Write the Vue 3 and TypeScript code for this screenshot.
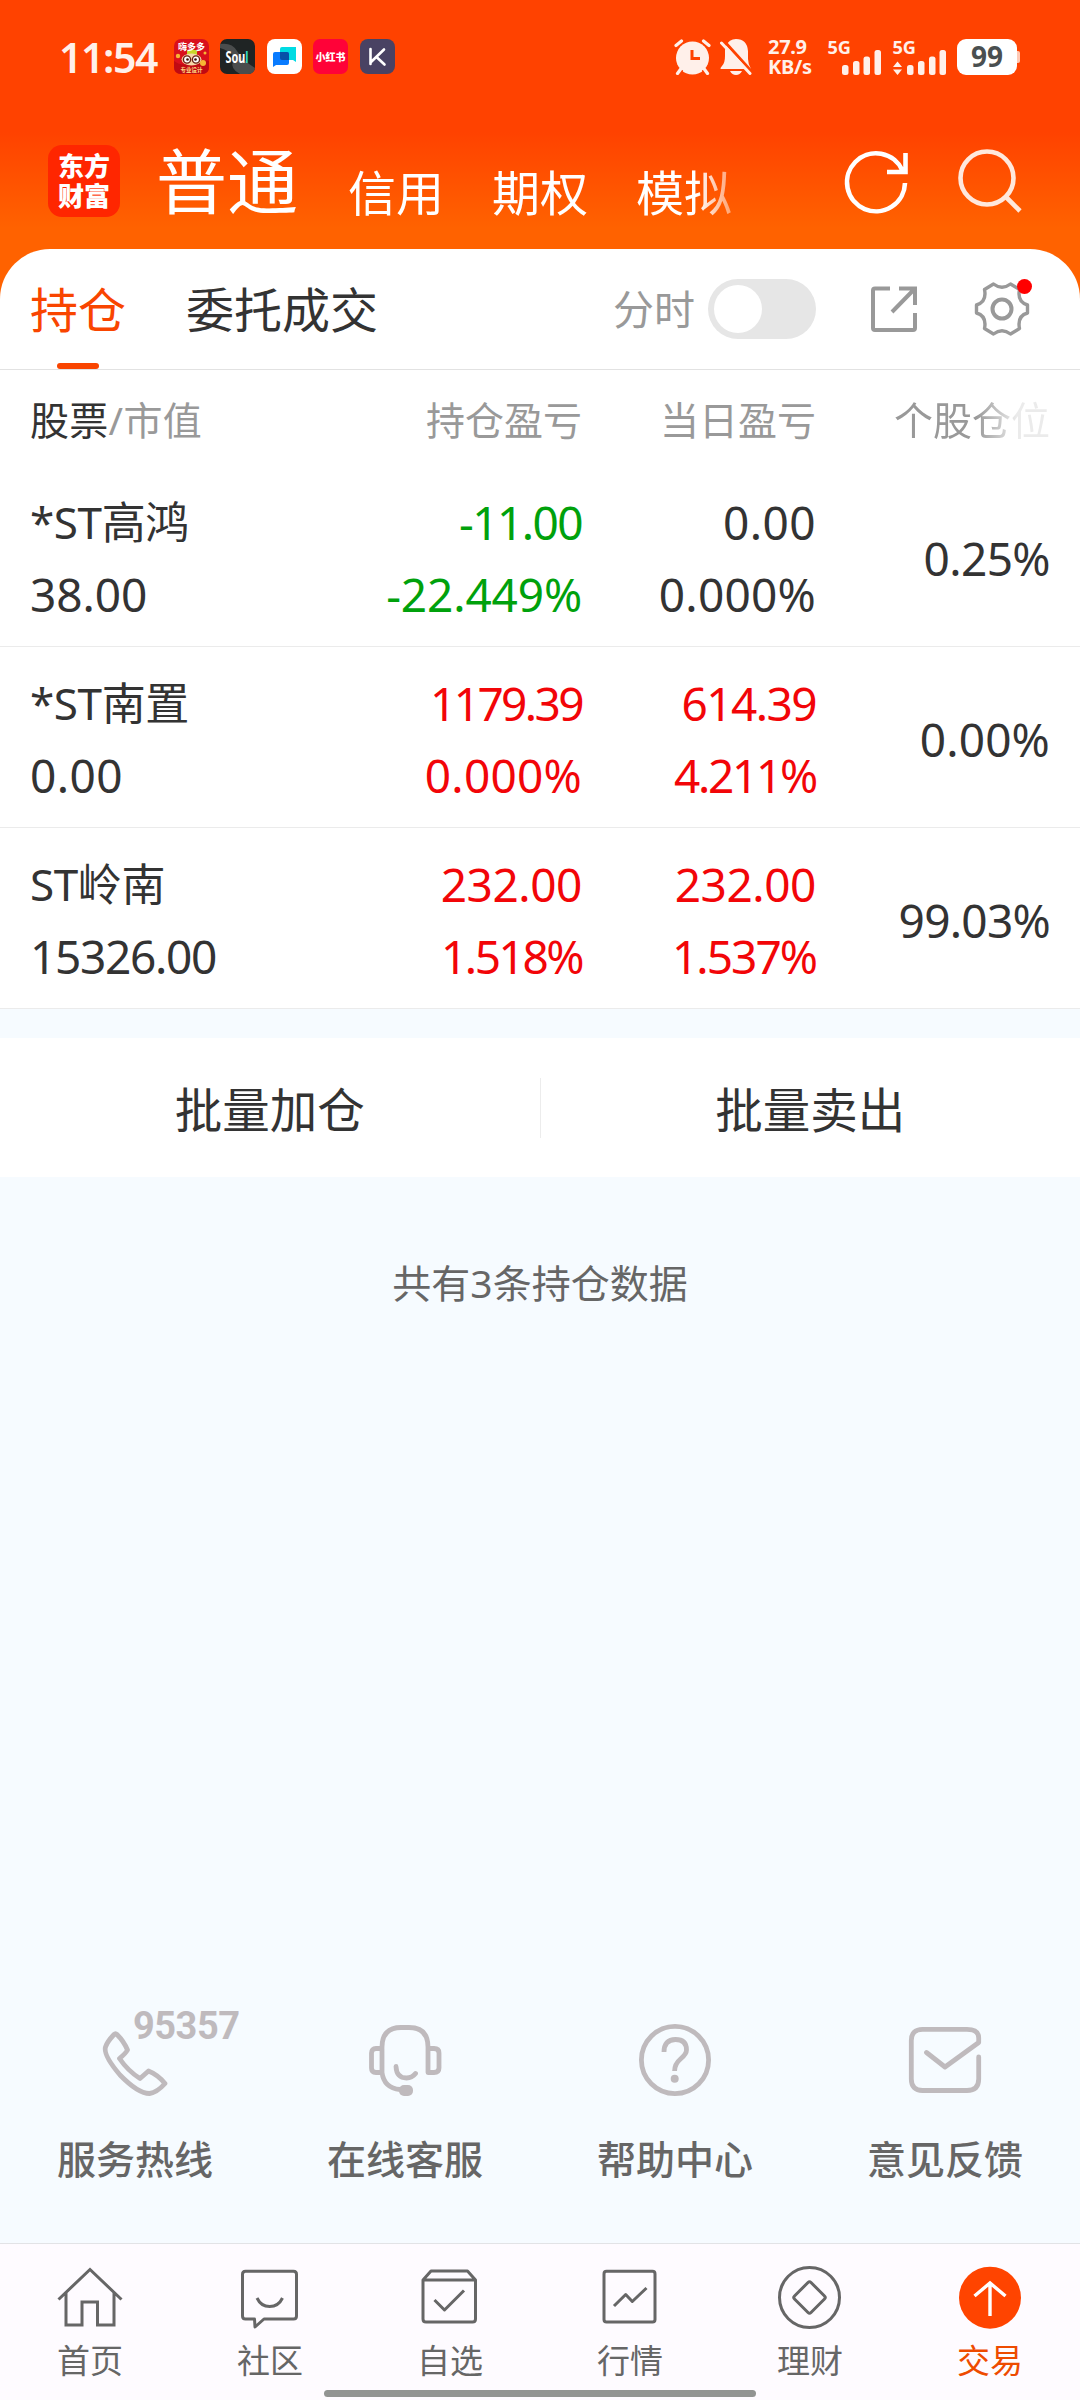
<script setup lang="ts">
interface Holding {
  name: string
  value: string
  profit: [string, string]
  today: [string, string]
  profitTone: string
  todayTone: string
  share: string
}

const accountTabs: string[] = ['信用', '期权', '模拟']

const holdings: Holding[] = [
  { name: '*ST高鸿', value: '38.00', profit: ['-11.00', '-22.449%'], today: ['0.00', '0.000%'], profitTone: 'down', todayTone: 'flat', share: '0.25%' },
  { name: '*ST南置', value: '0.00', profit: ['1179.39', '0.000%'], today: ['614.39', '4.211%'], profitTone: 'up', todayTone: 'up', share: '0.00%' },
  { name: 'ST岭南', value: '15326.00', profit: ['232.00', '1.518%'], today: ['232.00', '1.537%'], profitTone: 'up', todayTone: 'up', share: '99.03%' },
]

const services = [
  { id: 'phone', label: '服务热线' },
  { id: 'headset', label: '在线客服' },
  { id: 'help', label: '帮助中心' },
  { id: 'mail', label: '意见反馈' },
]

const navItems = [
  { id: 'home', label: '首页' },
  { id: 'community', label: '社区' },
  { id: 'watch', label: '自选' },
  { id: 'market', label: '行情' },
  { id: 'wealth', label: '理财' },
  { id: 'trade', label: '交易' },
]

const digitShift: Record<string, number> = {
  '0': 0.6, '1': -6.2, '2': -1.2, '3': -1.4, '4': 0.9, '5': -1.4, '6': -1.4, '7': -1.8, '9': -1.3, '-': 1.8, '%': -1,
}
function tracking(text: string): { letterSpacing: string } {
  const shift = [...text].reduce((sum, ch) => sum + (digitShift[ch] ?? 0), 0)
  return { letterSpacing: (shift / text.length).toFixed(2) + 'px' }
}
</script>

<template>
  <div class="screen">
    <header class="top">
      <div class="status">
        <span class="clock">11:54</span>
        <div class="apps">
          <svg width="35" height="35" viewBox="0 0 35 35">
            <rect width="35" height="35" rx="7" fill="#d9101c" />
            <path d="M0 22Q8 28 17 24T35 22V28Q35 35 28 35H7Q0 35 0 28Z" fill="#c00a12" />
            <rect x="13" y="11" width="10" height="5" rx="1" fill="#c8d72a" />
            <ellipse cx="17.500" cy="20.500" rx="10" ry="6" fill="#f6d7a8" />
            <circle cx="13" cy="20.500" r="3.600" fill="#fff" stroke="#6b2014" stroke-width="1.400" />
            <circle cx="22" cy="20.500" r="3.600" fill="#fff" stroke="#6b2014" stroke-width="1.400" />
            <circle cx="13.500" cy="20.500" r="1.300" fill="#401008" /><circle cx="21.500" cy="20.500" r="1.300" fill="#401008" />
            <circle cx="29" cy="24" r="3" fill="#f7b733" /><circle cx="4" cy="17" r="2.200" fill="#f7b733" /><circle cx="31" cy="14" r="1.500" fill="#f7b733" />
            <text x="17.500" y="11" font-size="9" font-weight="700" fill="#fff" text-anchor="middle">嗨多多</text>
            <text x="17.500" y="33" font-size="5.500" font-weight="700" fill="#ffd980" text-anchor="middle">专业设计</text>
          </svg>
          <svg width="35" height="35" viewBox="0 0 35 35">
            <rect width="35" height="35" rx="7" fill="#1f2424" />
            <path d="M0 5Q12 3 17 12T35 29Q34 35 28 35H20Q10 30 13 22T0 9Z" fill="#4a4d4d" />
            <text x="5.500" y="24" font-size="16.500" font-weight="700" fill="#fff" textLength="23" lengthAdjust="spacingAndGlyphs">Sou<tspan fill="#2fd9c4">l</tspan></text>
          </svg>
          <svg width="35" height="35" viewBox="0 0 35 35">
            <rect width="35" height="35" rx="8" fill="#fff" />
            <path d="M15 8H29V23L26 21H15Q13 21 13 19V10Q13 8 15 8Z" fill="#00dbe3" />
            <path d="M8 13H20Q22 13 22 15V24Q22 26 20 26H9L6 28V15Q6 13 8 13Z" fill="#087bff" />
            <path d="M13 13H20Q22 13 22 15V21H15Q13 21 13 19Z" fill="#0650a8" />
          </svg>
          <svg width="35" height="35" viewBox="0 0 35 35">
            <rect width="35" height="35" rx="7" fill="#ff0238" />
            <text x="17.500" y="21.500" font-size="10" font-weight="900" fill="#fff" text-anchor="middle">小红书</text>
          </svg>
          <svg width="35" height="35" viewBox="0 0 35 35">
            <rect width="35" height="35" rx="8" fill="#494263" />
            <path d="M10.500 10V25M24 10.500L10.500 23.500M16.500 18L24.500 25.500" fill="none" stroke="#fff" stroke-width="2.600" stroke-linecap="round" />
          </svg>
        </div>
        <div class="system">
          <svg class="alarm" width="37" height="36" viewBox="0 0 37 36">
            <circle cx="18.500" cy="19" r="16.500" fill="#fff0ea" />
            <path d="M1.500 6.500L7.500 1.500M35.500 6.500L29.500 1.500M7 30L3 35M30 30L34 35" stroke="#ff4200" stroke-width="6" />
            <circle cx="18.500" cy="19" r="15.500" fill="#fff0ea" />
            <path d="M2 6.500L7.500 2M35 6.500L29.500 2M7.500 29L3.500 34.500M29.500 29L33.500 34.500" stroke="#fff0ea" stroke-width="3.200" stroke-linecap="round" />
            <path d="M18 11V19.500H26" fill="none" stroke="#ff4200" stroke-width="3" />
          </svg>
          <svg class="bell" width="32" height="36" viewBox="0 0 32 36">
            <path d="M6 7Q9 0 16 0 27 0 28 12V20Q28 25 31 30H1Q-0.500 30 2 27 5 24 5 17V11Z" fill="#fff0ea" />
            <path d="M10 32H22Q20 36 16 36T10 32Z" fill="#fff0ea" />
            <path d="M4 2L33 34" stroke="#ff4200" stroke-width="3" />
            <path d="M1.500 4L30 34.500" stroke="#fff0ea" stroke-width="3" stroke-linecap="round" />
          </svg>
          <div class="speed"><span>27.9</span><span>KB/s</span></div>
          <svg class="signal" width="120" height="44" viewBox="0 -4 120 44">
            <g fill="#fff0ea">
              <text x="0.500" y="14.500" font-size="18.500" font-weight="700" textLength="23.500" lengthAdjust="spacingAndGlyphs">5G</text>
              <rect x="15" y="26" width="6.500" height="10" rx="2.500" /><rect x="26" y="22" width="6.500" height="14" rx="2.500" />
              <rect x="36.500" y="17.500" width="6.500" height="18.500" rx="2.500" /><rect x="47.500" y="11" width="6.500" height="25" rx="2.500" />
              <text x="65.500" y="14.500" font-size="18.500" font-weight="700" textLength="23.500" lengthAdjust="spacingAndGlyphs">5G</text>
              <path d="M66 28L70.500 22.500L75 28ZM66 30.500H75L70.500 36Z" />
              <rect x="80" y="26" width="6.500" height="10" rx="2.500" /><rect x="91" y="22" width="6.500" height="14" rx="2.500" />
              <rect x="102" y="17.500" width="6.500" height="18.500" rx="2.500" /><rect x="112.500" y="11" width="6.500" height="25" rx="2.500" />
            </g>
          </svg>
          <span class="battery">99</span><span class="nub"></span>
        </div>
      </div>
      <div class="account">
        <div class="logo"><span>东方</span><span>财富</span></div>
        <span class="current">普通</span>
        <div class="others"><span v-for="tab in accountTabs" :key="tab">{{ tab }}</span></div>
        <div class="actions">
          <svg width="72" height="72" viewBox="0 0 72 72" fill="none" stroke="#fff" stroke-width="4.600">
            <path d="M65 38A29 29 0 1 1 62.500 25.500M65.500 8V27H47" />
          </svg>
          <svg width="72" height="72" viewBox="0 0 72 72" fill="none" stroke="#ffe8dc" stroke-width="4.600">
            <circle cx="33" cy="33" r="26.500" /><path d="M51.500 51.500L66 66" />
          </svg>
        </div>
      </div>
    </header>

    <main class="card">
      <div class="tabs">
        <span class="tab active">持仓</span>
        <span class="tab">委托成交</span>
        <span class="minute">分时</span>
        <span class="switch"><i></i></span>
        <svg class="share" width="54" height="54" viewBox="0 0 54 54" fill="none" stroke="#999" stroke-width="4">
          <path d="M23 6.500H8Q6 6.500 6 8.500V46Q6 48 8 48H46Q48 48 48 46V31M32 6.500H48V23M47.500 7L25 30" />
        </svg>
        <div class="gear">
          <svg width="60" height="60" viewBox="0 0 60 60" fill="none" stroke="#999" stroke-width="3.400">
            <path d="M4.500 26Q15 23 12.500 10.500L21.500 5Q30 11.500 38.500 5L47.500 10.500Q45 23 55.500 26V34Q45 37 47.500 49.500L38.500 55Q30 48.500 21.500 55L12.500 49.500Q15 37 4.500 34Z" stroke-linejoin="round" />
            <circle cx="30" cy="30" r="9.500" stroke-width="4" />
          </svg>
          <i class="dot"></i>
        </div>
      </div>
      <div class="grid heading">
        <span class="first"><b>股票</b>/市值</span>
        <span>持仓盈亏</span>
        <span>当日盈亏</span>
        <span class="fading">个股仓位</span>
      </div>
      <div v-for="row in holdings" :key="row.name" class="grid row">
        <div class="cell first"><span class="name">{{ row.name }}</span><span :style="tracking(row.value)">{{ row.value }}</span></div>
        <div class="cell" :class="row.profitTone"><span v-for="n in row.profit" :key="n" :style="tracking(n)">{{ n }}</span></div>
        <div class="cell" :class="row.todayTone"><span v-for="n in row.today" :key="n" :style="tracking(n)">{{ n }}</span></div>
        <div class="cell portion"><span :style="tracking(row.share)">{{ row.share }}</span></div>
      </div>
    </main>

    <div class="batch"><span>批量加仓</span><i></i><span>批量卖出</span></div>
    <p class="count">共有3条持仓数据</p>

    <section class="services">
      <div v-for="s in services" :key="s.id" class="service">
        <svg width="80" height="80" viewBox="0 0 80 80" fill="none" stroke="#bfbabd" stroke-width="4.800" stroke-linecap="round" stroke-linejoin="round">
          <path v-if="s.id === 'phone'" d="M22 14.500Q29 21.500 32.500 30Q31 33 24.500 38.500Q33 51 45 58.500L53.500 51Q62.500 54.500 70 63.500Q62 72.500 54.500 73.500Q43 73.500 25 55Q8 35 10.500 27Q12 22 19 14.500Q20.500 13 22 14.500Z" />
          <g v-else-if="s.id === 'headset'">
            <path d="M17 52.500V27Q17 7.500 36 7.500H44Q63 7.500 63 27V52.500H69Q74 52.500 74 48V33Q74 28.500 69 28.500H63M17 28.500H11Q6.500 28.500 6.500 33V48Q6.500 52.500 11 52.500H17Q19 68 35 69.500M31 46.500Q31.500 58 41.500 58 47 58 50.500 53.500" />
            <rect x="34" y="65" width="14" height="11" rx="5" fill="#bfbabd" stroke="none" />
          </g>
          <g v-else-if="s.id === 'help'">
            <circle cx="40" cy="40" r="33.600" />
            <path d="M29 32Q29 19.500 40.500 19.500 51.500 19.500 51.500 30 51.500 34 45.500 39 39.600 44 39.600 51" stroke-linecap="butt" />
            <circle cx="39.700" cy="58.700" r="4" fill="#bfbabd" stroke="none" />
          </g>
          <path v-else d="M73.700 37V59Q73.700 70.500 62 70.500H17.500Q6.300 70.500 6.300 59V20.500Q6.300 9.300 17.500 9.300H62Q73.700 9.300 73.700 18V22.500L40 47 21.500 32.500" />
        </svg>
        <span v-if="s.id === 'phone'" class="hotline">95357</span>
        <span class="caption">{{ s.label }}</span>
      </div>
    </section>

    <nav class="nav">
      <div v-for="n in navItems" :key="n.id" class="nav-item" :class="{ on: n.id === 'trade' }">
        <svg width="72" height="72" viewBox="0 0 72 72" fill="none" stroke="#666" stroke-width="3" stroke-linejoin="round">
          <path v-if="n.id === 'home'" d="M4.500 38.500L36 8.500 67.500 38.500M12 32V64H28V41H43.500V64H60V32" stroke-linejoin="miter" />
          <path v-else-if="n.id === 'community'" d="M11.500 10.300H59.500Q62.500 10.300 62.500 13.300V55Q62.500 58 59.500 58H30L21 66 20.500 58H11.500Q8.500 58 8.500 55V13.300Q8.500 10.300 11.500 10.300ZM23 37Q27 45.500 35.700 45.500T48.500 37" />
          <path v-else-if="n.id === 'watch'" d="M9 19H61.500M9 19L17 10H53.500L61.500 19V58Q61.500 61 58.500 61H12Q9 61 9 58ZM20.500 39L30.500 49 50 29.500" />
          <path v-else-if="n.id === 'market'" d="M12.500 10.300H58.500Q61 10.300 61 13V58.500Q61 61 58.500 61H12.500Q10 61 10 58.500V13Q10 10.300 12.500 10.300ZM20 45L31.700 33.500 38.300 40.500 52.500 27" />
          <g v-else-if="n.id === 'wealth'">
            <circle cx="35.500" cy="36.500" r="30" /><path d="M34 21.500Q35.500 20 37 21.500L50.500 35Q52 36.500 50.500 38L37 51.500Q35.500 53 34 51.500L20.500 38Q19 36.500 20.500 35Z" />
          </g>
          <g v-else><circle cx="36" cy="36.700" r="31" fill="#ff4400" stroke="none" /><path d="M36 55V22M20.500 35L36 22 51.500 35" stroke="#fff" stroke-width="3.400" stroke-linejoin="miter" /></g>
        </svg>
        <span>{{ n.label }}</span>
      </div>
      <i class="handle"></i>
    </nav>
  </div>
</template>

<style>
body { margin: 0; }
</style>

<style scoped>
* { box-sizing: border-box; }
i { font-style: normal; display: block; }
svg { display: block; flex: none; }
.screen { width: 1080px; height: 2400px; display: flex; flex-direction: column; overflow: hidden; background: #f6fbff; color: #333; font-family: "Noto Sans", "Noto Sans CJK SC", sans-serif; white-space: nowrap; }
.top { height: 315px; margin-bottom: -66px; flex: none; background: linear-gradient(#ff4200 132px, #ff6200 228px); }
.status { height: 113px; padding: 0 60px 0 59px; display: flex; align-items: center; }
.clock { width: 115px; color: #fff0ea; font-size: 41px; font-weight: 600; letter-spacing: -1.400px; line-height: 60px; }
.apps { display: flex; gap: 11.600px; }
.system { flex: 1; display: flex; align-items: center; padding-left: 279px; }
.bell { margin-left: 9px; }
.speed { width: 42px; margin-left: 16px; display: flex; flex-direction: column; color: #fff0ea; font-size: 20px; font-weight: 700; line-height: 20px; letter-spacing: -0.300px; }
.signal { margin-left: 17px; }
.battery { width: 60px; height: 36px; flex: none; margin-left: 10px; border-radius: 9px; background: #fff; color: #4a4f50; font-size: 28px; font-weight: 700; line-height: 35px; text-align: center; }
.nub { width: 3px; height: 12px; flex: none; border-radius: 0 2px 2px 0; background: #ffc9b5; }
.account { height: 136px; padding: 0 48px; display: flex; align-items: center; color: #fff; }
.logo { width: 72px; height: 72px; border-radius: 14px; background: #ff2600; display: flex; flex-direction: column; align-items: center; justify-content: center; font-size: 26px; font-weight: 800; line-height: 30px; }
.current { margin-left: 36px; font-size: 71px; line-height: 80px; }
.others { display: flex; gap: 48px; width: 386px; margin: 23px 0 0 50px; font-size: 48px; line-height: 60px; -webkit-mask-image: linear-gradient(90deg, #000 348px, rgba(0, 0, 0, 0.400) 386px); mask-image: linear-gradient(90deg, #000 348px, rgba(0, 0, 0, 0.400) 386px); }
.actions { margin-left: auto; margin-right: 6px; display: flex; gap: 42px; }
.card { flex: none; background: #fff; border-radius: 50px 50px 0 0; }
.tabs { height: 121px; border-bottom: 1px solid #e2e2e2; padding-left: 30px; display: flex; align-items: center; }
.tab { height: 120px; font-size: 48px; line-height: 122px; }
.tab + .tab { margin-left: 60px; }
.tab.active { color: #f94500; display: flex; flex-direction: column; align-items: center; }
.tab.active::after { content: ""; width: 42px; height: 6px; margin-top: -8px; border-radius: 3px; background: #f94500; }
.minute { margin-left: auto; color: #999; font-size: 41px; line-height: 60px; }
.switch { width: 108px; height: 60px; margin-left: 13px; padding: 6px; border-radius: 30px; background: #e6e6e6; }
.switch i { width: 48px; height: 48px; border-radius: 50%; background: #fff; }
.share { margin-left: 51px; }
.gear { position: relative; margin: 0 48px 0 51px; }
.dot { position: absolute; right: 0; top: 0; width: 15px; height: 15px; border-radius: 50%; background: #f00; }
.grid { display: grid; grid-template-columns: 283px 269px 234px 234px; padding: 0 30px; text-align: right; }
.first { text-align: left; }
.heading { height: 96px; line-height: 99px; font-size: 39px; color: #999; }
.heading b { font-weight: 400; color: #333; }
.heading .first { letter-spacing: 0.300px; }
.fading { -webkit-mask-image: linear-gradient(90deg, #000 160px, rgba(0, 0, 0, 0.200) 200px); mask-image: linear-gradient(90deg, #000 160px, rgba(0, 0, 0, 0.200) 200px); }
.row { height: 181px; padding-top: 3px; border-bottom: 1px solid #ebebeb; font-size: 46px; line-height: 72px; }
.cell { display: flex; flex-direction: column; justify-content: center; }
.name { font-size: 44px; letter-spacing: -0.400px; }
.up { color: #f20508; }
.down { color: #00a10c; }
.batch { height: 139px; margin-top: 29px; flex: none; background: #fff; display: flex; align-items: center; font-size: 47.500px; }
.batch span { flex: 1; text-align: center; }
.batch i { width: 1px; height: 60px; background: #ececec; }
.count { margin: 76px 0 0; height: 60px; flex: none; text-align: center; font-size: 39px; line-height: 60px; color: #666; }
.services { margin-top: auto; height: 223px; flex: none; display: flex; }
.service { position: relative; flex: 1; display: flex; flex-direction: column; align-items: center; color: #666; }
.caption { margin-top: 29px; font-size: 39px; font-weight: 500; line-height: 60px; }
.hotline { position: absolute; left: 133px; top: -13px; font-family: Roboto, sans-serif; font-size: 38px; font-weight: 700; line-height: 38px; color: #bfbabd; letter-spacing: -0.500px; }
.nav { position: relative; height: 157px; flex: none; display: flex; padding-top: 17px; background: #fefbff; border-top: 1px solid #e2e3e6; color: #666; }
.nav-item { flex: 1; display: flex; flex-direction: column; align-items: center; font-size: 33px; line-height: 40px; }
.nav-item span { margin-top: 8px; }
.on { color: #ee4b00; }
.handle { position: absolute; left: 324px; bottom: 3px; width: 432px; height: 7px; border-radius: 4px; background: #929492; }
</style>
